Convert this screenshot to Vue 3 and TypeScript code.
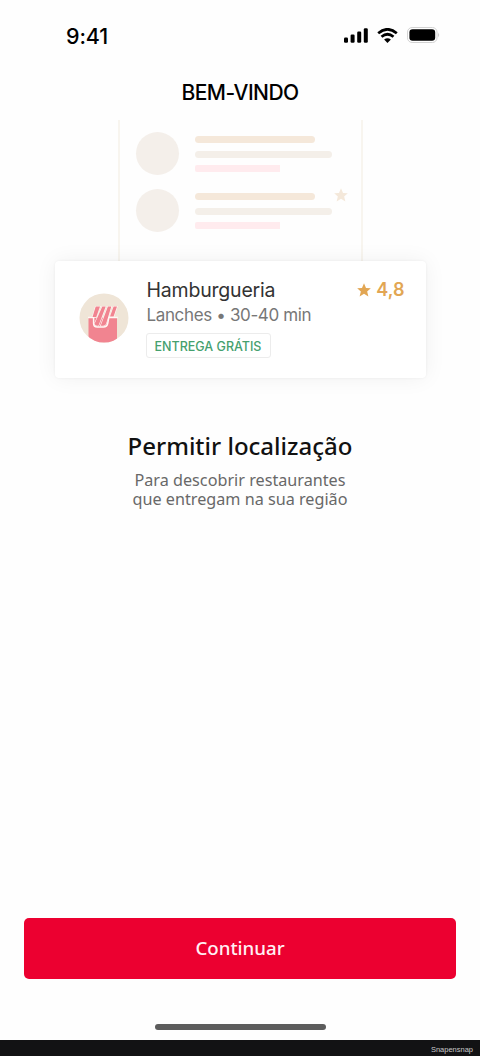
<script setup lang="ts">
interface Placeholder {
  id: number
  starred: boolean
}

const placeholders: Placeholder[] = [
  { id: 1, starred: false },
  { id: 2, starred: true },
]

const restaurant = {
  name: 'Hamburgueria',
  details: 'Lanches • 30-40 min',
  badge: 'ENTREGA GRÁTIS',
  rating: '4,8',
}

const starPath = 'M8 .4 10.300 5.600 15.800 6 11.600 9.600 13 15.300 8 12.300 3 15.300 4.400 9.600.2 6 5.700 5.600Z'
</script>

<template>
  <div class="screen">
    <header class="status">
      <span class="time">9:41</span>
      <div class="indicators">
        <svg class="signal" width="24" height="15" viewBox="0 0 24 15">
          <rect x="0" y="9.5" width="4" height="5.2" rx="1.2" />
          <rect x="6.6" y="6.5" width="4" height="8.2" rx="1.2" />
          <rect x="13.2" y="3.5" width="4" height="11.2" rx="1.2" />
          <rect x="19.8" y=".3" width="4" height="14.4" rx="1.2" />
        </svg>
        <svg class="wifi" width="21" height="15" viewBox="0 0 21 15">
          <path d="M1.200 5.200Q10.500-2.600 19.800 5.200" />
          <path d="M4.500 8.800Q10.500 3.700 16.500 8.800" />
          <path class="solid" d="M7.100 11.600Q10.500 8.800 13.900 11.600L10.500 14.900Z" />
        </svg>
        <svg class="battery" width="33" height="16" viewBox="0 0 33 16">
          <rect class="shell" x=".5" y=".5" width="29.500" height="15" rx="4.600" />
          <rect x="2.400" y="2.300" width="25.800" height="11.400" rx="3.200" />
          <path class="cap" d="M31.300 5.600Q33 8 31.300 10.400Z" />
        </svg>
      </div>
    </header>

    <h1 class="heading">BEM-VINDO</h1>

    <section class="preview">
      <div class="list">
        <div v-for="item in placeholders" :key="item.id" class="row">
          <div class="avatar"></div>
          <div class="lines">
            <div class="line title"></div>
            <div class="line subtitle"></div>
            <div class="line tag"></div>
          </div>
          <svg v-if="item.starred" class="faint-star" width="14" height="14" viewBox="0 0 16 16">
            <path :d="starPath" />
          </svg>
        </div>
      </div>
      <article class="card">
        <svg class="logo" width="50" height="50" viewBox="0 0 50 50">
          <defs>
            <clipPath id="logo-circle"><circle cx="25" cy="25" r="24.500" /></clipPath>
          </defs>
          <g clip-path="url(#logo-circle)">
            <rect class="cream" width="50" height="50" />
            <path class="pink" d="M9.500 24.800H38V50H9.500Z" />
            <path class="pocket" d="M9 24.500H14.600V30.500Q14.600 34 18.200 34H24.500Q28 34 28.700 30.500L29.800 24.500H38.800" />
            <path class="fry" d="M16.700 13.500H21L17.300 24H13.500Z" />
            <path class="fry" d="M23.300 13.500H26.700L19.500 32.700H18.300Q15.700 32.700 15.800 30.300Z" />
            <path class="fry" d="M28.900 13.500H32.300L27.500 29.500Q26.600 32.700 24 32.700H21.700Z" />
            <path class="fry" d="M34.600 13.500H38L34.600 23.600H31Z" />
          </g>
        </svg>
        <div class="info">
          <span class="name">{{ restaurant.name }}</span>
          <span class="details">{{ restaurant.details }}</span>
          <span class="badge">{{ restaurant.badge }}</span>
        </div>
        <div class="rating">
          <svg width="14" height="14" viewBox="0 0 16 16"><path :d="starPath" /></svg>
          <span>{{ restaurant.rating }}</span>
        </div>
      </article>
    </section>

    <section class="message">
      <h2>Permitir localização</h2>
      <p>Para descobrir restaurantes<br />que entregam na sua região</p>
    </section>

    <button class="primary" type="button">Continuar</button>
    <div class="home-bar"></div>
    <footer>Snapensnap</footer>
  </div>
</template>

<style>
body {
  margin: 0;
  background: #fefefe;
}
</style>

<style scoped>
.screen {
  box-sizing: border-box;
  display: flex;
  flex-direction: column;
  width: 480px;
  height: 1056px;
  overflow: hidden;
  background: #fefefe;
  font-family: 'Noto Sans', sans-serif;
  color: #111;
}
.screen * {
  box-sizing: border-box;
}
.status {
  display: flex;
  justify-content: space-between;
  height: 72px;
  padding: 24px 40px 0 66px;
  flex: none;
}
.time {
  font: 500 21.500px/24px Inter, sans-serif;
  letter-spacing: -0.1px;
  color: #000;
}
.indicators {
  display: flex;
  align-items: flex-start;
  padding-top: 3px;
}
.signal {
  margin-top: 1px;
}
.wifi {
  margin: 1px 0 0 9px;
}
.wifi path {
  fill: none;
  stroke: #000;
  stroke-width: 2.7;
}
.wifi .solid {
  fill: #000;
  stroke: none;
}
.battery {
  margin-left: 9px;
}
.battery .shell {
  fill: #fff;
  stroke: #d2d2d2;
}
.battery .cap {
  fill: #b5b5b5;
}
.heading {
  margin: 0;
  flex: none;
  height: 48px;
  padding-top: 8px;
  text-align: center;
  font: 500 21px/26px Inter, sans-serif;
  letter-spacing: -0.55px;
  color: #000;
}
.preview {
  display: flex;
  flex-direction: column;
  align-items: center;
  flex: none;
}
.list {
  width: 245px;
  height: 141px;
  padding: 12px 14px 0 17px;
  margin-left: 1px;
  border: solid #f8f5ef;
  border-width: 0 2px;
}
.row {
  display: flex;
  height: 57px;
}
.avatar {
  flex: none;
  width: 43px;
  height: 43px;
  margin-left: -1px;
  border-radius: 50%;
  background: #f4efea;
}
.lines {
  flex: none;
  width: 137px;
  padding-top: 4px;
  margin-left: 16px;
}
.line {
  height: 7px;
  border-radius: 4px;
  background: #f4efe9;
}
.line.title {
  width: 120px;
  background: #f5e8da;
}
.line.subtitle {
  margin-top: 8px;
}
.line.tag {
  width: 85px;
  margin-top: 7px;
  border-radius: 2px 0 0 2px;
  background: #ffebee;
}
.faint-star {
  flex: none;
  fill: #f4e8da;
  margin: -1px 0 0 2px;
}
.card {
  z-index: 1;
  display: flex;
  width: 371px;
  height: 117px;
  padding: 16px 21px 0 24px;
  border-radius: 4px;
  background: #fff;
  box-shadow: 0 0 3px rgba(0, 0, 0, 0.06), 0 0 22px rgba(0, 0, 0, 0.06);
}
.logo {
  flex: none;
  margin-top: 15.500px;
}
.cream {
  fill: #efe5d7;
}
.pink {
  fill: #f18490;
}
.fry {
  fill: #f18490;
  stroke: #fff7f4;
  stroke-width: 1.200;
  paint-order: stroke;
}
.pocket {
  fill: none;
  stroke: #fff7f4;
  stroke-width: 1.500;
}
.info {
  display: flex;
  flex-direction: column;
  align-items: flex-start;
  margin-left: 18px;
  white-space: nowrap;
}
.name {
  font: 400 19.500px/26px Inter, sans-serif;
  letter-spacing: -0.2px;
  color: #333;
}
.details {
  font: 400 17px/25px Inter, sans-serif;
  letter-spacing: -0.36px;
  color: #777;
}
.badge {
  width: 125px;
  height: 25px;
  margin: 5px 0 0 -1px;
  padding-top: 1px;
  border: 1px solid #ececec;
  border-radius: 3px;
  text-align: center;
  font: 500 12.500px/23px Inter, sans-serif;
  color: #45a06e;
}
.rating {
  display: flex;
  gap: 5px;
  margin-left: auto;
  height: 26px;
  align-items: center;
  font: 600 18px/26px Inter, sans-serif;
  color: #e2a653;
}
.rating svg {
  fill: #e2a653;
}
.message {
  flex: none;
  padding-top: 50px;
  height: 151px;
  text-align: center;
}
.message h2 {
  margin: 0;
  font: 500 24px/36px 'Noto Sans', sans-serif;
  color: #111;
}
.message p {
  margin: 7px 0 0;
  font: 400 16.200px/19px 'Noto Sans', sans-serif;
  color: #686868;
}
.primary {
  flex: none;
  height: 61px;
  margin: auto 24px 45px;
  padding: 0 0 1px;
  border: 0;
  border-radius: 5px;
  background: #ec0030;
  color: #fff0f4;
  font: 500 18.700px/60px 'Noto Sans', sans-serif;
}
.home-bar {
  flex: none;
  align-self: center;
  width: 171px;
  height: 6px;
  margin-bottom: 10px;
  border-radius: 3px;
  background: #5c5c5c;
}
footer {
  flex: none;
  height: 16px;
  padding: 3px 7px 0;
  background: #121214;
  color: #c8c8c8;
  font: 400 7.500px/13px 'Liberation Sans', sans-serif;
  text-align: right;
}
</style>
